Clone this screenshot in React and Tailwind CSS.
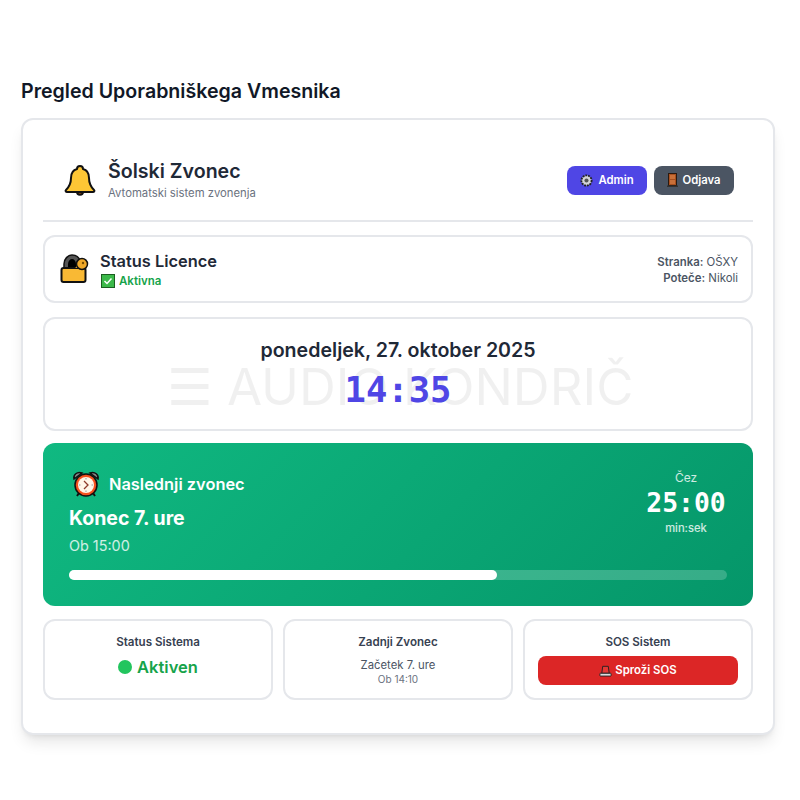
const BellIcon = () => (
  <svg width="32" height="34" viewBox="0 0 32 34" className="shrink-0 mt-[2px]">
    <path d="M13 28c0 3.500 6 3.500 6 0z" fill="#b45309" stroke="#111" strokeWidth="2" />
    <path d="M16 2c2 0 3 1 3 3 4 1 6 5 6 9 0 5 1 8 5 12 1 1 0 2-1 2H3c-1 0-2-1-1-2 4-4 5-7 5-12 0-4 2-8 6-9 0-2 1-3 3-3z" fill="#fdc635" stroke="#111" strokeWidth="2" strokeLinejoin="round" />
  </svg>
);

const LockIcon = () => (
  <svg width="30" height="30" viewBox="0 0 30 30" className="shrink-0">
    <path d="M4 15V10C4 5 8 1 12 1s7 2 8 6v8z" fill="#555" stroke="#111" strokeWidth="1.500" />
    <path d="M8 15v-5c0-3 2-5 4-5s4 2 4 5v5z" fill="#000" />
    <rect x="1.500" y="14" width="24" height="14" rx="2" fill="#f9b934" stroke="#111" strokeWidth="2" />
    <path d="M15 14l4-3 5 3z" fill="#e8a317" />
    <circle cx="22" cy="10" r="5.500" fill="#f0a92a" stroke="#111" strokeWidth="1.500" />
    <circle cx="23" cy="9" r="1.200" fill="#7a4f00" />
  </svg>
);

const CheckIcon = () => (
  <svg width="14" height="14" viewBox="0 0 14 14" className="shrink-0">
    <rect x="0.5" y="0.5" width="13" height="13" fill="#3cb94a" stroke="#1b5e20" />
    <path d="M3.5 7l2.500 2.500 4.500-5" fill="none" stroke="#fff" strokeWidth="1.500" />
  </svg>
);

const GearIcon = () => (
  <svg width="13" height="13" viewBox="0 0 14 14" className="shrink-0">
    <circle cx="7" cy="7" r="5.500" fill="#d4d4d8" stroke="#222" strokeWidth="2" strokeDasharray="2 1" />
    <circle cx="7" cy="7" r="2.200" fill="#555" />
  </svg>
);

const DoorIcon = () => (
  <svg width="11" height="14" viewBox="0 0 11 14" className="shrink-0">
    <rect x="1.500" y="0.5" width="8" height="12" fill="#a8501f" stroke="#2b1a10" />
    <rect x="0" y="12.500" width="11" height="1.500" fill="#333" />
    <rect x="3" y="2" width="5" height="4" fill="#c8703a" />
    <rect x="3" y="7" width="5" height="4" fill="#c8703a" />
  </svg>
);

const ClockIcon = () => (
  <svg width="28" height="28" viewBox="0 0 28 28" className="shrink-0">
    <path d="M2 9c-1-4 3-8 8-6zM26 9c1-4-3-8-8-6z" fill="#888" stroke="#111" strokeWidth="1.500" />
    <path d="M7 23l-2 3M21 23l2 3" stroke="#111" strokeWidth="2" />
    <circle cx="14" cy="15" r="11" fill="#f4511e" stroke="#111" strokeWidth="1.500" />
    <circle cx="14" cy="15" r="8" fill="#fff6e8" />
    <path d="M12 11l4 4-4 4" fill="none" stroke="#8d3b2b" strokeWidth="1.300" />
    <path d="M14 8v1.500M14 20.500V22M7 15h1.500M19.500 15H21" stroke="#999" strokeWidth="1" />
  </svg>
);

const SirenIcon = () => (
  <svg width="13" height="13" viewBox="0 0 14 14" className="shrink-0">
    <path d="M4 2.500h6l1 7.500H3z" fill="#e53935" stroke="#222" strokeWidth="1" />
    <rect x="1" y="10" width="12" height="3" rx="0.5" fill="#ddd" stroke="#222" strokeWidth="1" />
  </svg>
);

const Panel = ({ title, children }) => (
  <div className="flex-1 h-[81px] bg-white rounded-xl border-2 border-[#e5e7eb] px-[13px] pt-[13px] text-center">
    <h3 className="text-[11.6px] leading-[16px] font-semibold text-[#374151]">{title}</h3>
    {children}
  </div>
);

const App = () => {
  return (
    <div className="min-h-screen bg-white pt-[79px] pl-[21px] pr-[25px] font-['Inter',sans-serif]">
      <h1 className="text-[19.6px] leading-[24px] font-semibold text-[#111827] mb-[15px]">Pregled Uporabniškega Vmesnika</h1>

      <div className="h-[617px] rounded-xl border-2 border-[#e5e7eb] bg-white shadow-lg p-5">
        {/* Header */}
        <div className="h-[82px] flex items-center justify-between border-b-2 border-[#e5e7eb] pl-[21px] pr-[19px]">
          <div className="flex items-center gap-3">
            <BellIcon />
            <div className="mb-[2px]">
              <div className="text-[19.6px] leading-[28px] font-semibold text-[#1f2937]">Šolski Zvonec</div>
              <div className="text-[11.3px] leading-[16px] text-[#6b7280]">Avtomatski sistem zvonenja</div>
            </div>
          </div>
          <div className="flex gap-[7px]">
            <button className="h-[29px] w-[80px] rounded-lg bg-[#4f46e5] text-white text-[11.3px] font-semibold flex items-center justify-center gap-[5px]">
              <GearIcon />Admin
            </button>
            <button className="h-[29px] w-[80px] rounded-lg bg-[#4b5563] text-white text-[11.3px] font-semibold flex items-center justify-center gap-[4px]">
              <DoorIcon />Odjava
            </button>
          </div>
        </div>

        {/* License */}
        <div className="mt-[13px] h-[68px] rounded-xl border-2 border-[#e5e7eb] flex items-center justify-between pl-[15px] pr-[13px]">
          <div className="flex items-center gap-[10px]">
            <LockIcon />
            <div>
              <div className="text-[16.4px] leading-[22px] font-semibold text-[#1f2937] mb-[2px]">Status Licence</div>
              <div className="flex items-center gap-1 text-[11.5px] leading-[15px] font-semibold text-[#16a34a] pl-[1px]">
                <CheckIcon />Aktivna
              </div>
            </div>
          </div>
          <div className="text-right text-[11.4px] leading-[16px] text-[#4b5563] pt-[2px]">
            <div><span className="font-semibold">Stranka:</span> OŠXY</div>
            <div><span className="font-semibold">Poteče:</span> Nikoli</div>
          </div>
        </div>

        {/* Date and time */}
        <div className="relative mt-[14px] h-[114px] rounded-xl border-2 border-[#e5e7eb] overflow-hidden text-center pt-[17px]">
          <div className="absolute inset-0 flex items-center justify-center pt-[26px] pl-[4px] text-[51px] font-normal text-black/[0.06] whitespace-nowrap">
            ☰ AUDIO KONDRIČ
          </div>
          <div className="relative text-[19.6px] leading-[28px] font-semibold text-[#1f2937]">ponedeljek, 27. oktober 2025</div>
          <div className="relative mt-[6px] text-[35.5px] leading-[40px] font-bold text-[#4f46e5] font-['DejaVu_Sans_Mono',monospace]">14:35</div>
        </div>

        {/* Next bell */}
        <div className="mt-[12px] h-[163px] rounded-xl bg-[linear-gradient(135deg,#10b981,#059669)] px-[26px] pt-[27px]">
          <div className="flex justify-between">
            <div>
              <div className="flex items-center gap-[9px] h-[28px] ml-[3px]">
                <ClockIcon />
                <span className="text-[16.4px] font-semibold text-white">Naslednji zvonec</span>
              </div>
              <div className="mt-[6px] text-[19.5px] leading-[28px] font-bold text-white">Konec 7. ure</div>
              <div className="mt-[4px] text-[14.4px] leading-[20px] text-white/80">Ob 15:00</div>
            </div>
            <div className="text-center w-[82px]">
              <div className="text-xs leading-[16px] text-white/80">Čez</div>
              <div className="text-[26.4px] leading-[32px] font-bold text-white font-['DejaVu_Sans_Mono',monospace] mt-[1px]">25:00</div>
              <div className="text-[11.2px] leading-[16px] font-medium text-white/80 mt-[1px]">min:sek</div>
            </div>
          </div>
          <div className="mt-[14px] h-[10px] rounded-full bg-white/20">
            <div className="h-full w-[65%] rounded-full bg-white" />
          </div>
        </div>

        {/* Bottom row */}
        <div className="mt-[13px] flex gap-[10px]">
          <Panel title="Status Sistema">
            <div className="mt-[5px] flex items-center justify-center gap-[5px] text-[16.5px] font-semibold text-[#16a34a]">
              <span className="w-[14px] h-[14px] rounded-full bg-[#22c55e]" />Aktiven
            </div>
          </Panel>
          <Panel title="Zadnji Zvonec">
            <div className="mt-[7px] text-[11.3px] leading-[16px] text-[#4b5563]">Začetek 7. ure</div>
            <div className="text-[10px] leading-[12px] text-[#6b7280]">Ob 14:10</div>
          </Panel>
          <Panel title="SOS Sistem">
            <button className="mt-[6px] w-full h-[29px] rounded-lg bg-[#dc2626] text-white text-[11.4px] font-semibold flex items-center justify-center gap-[3px]">
              <SirenIcon />Sproži SOS
            </button>
          </Panel>
        </div>
      </div>
    </div>
  );
};

export default App;
